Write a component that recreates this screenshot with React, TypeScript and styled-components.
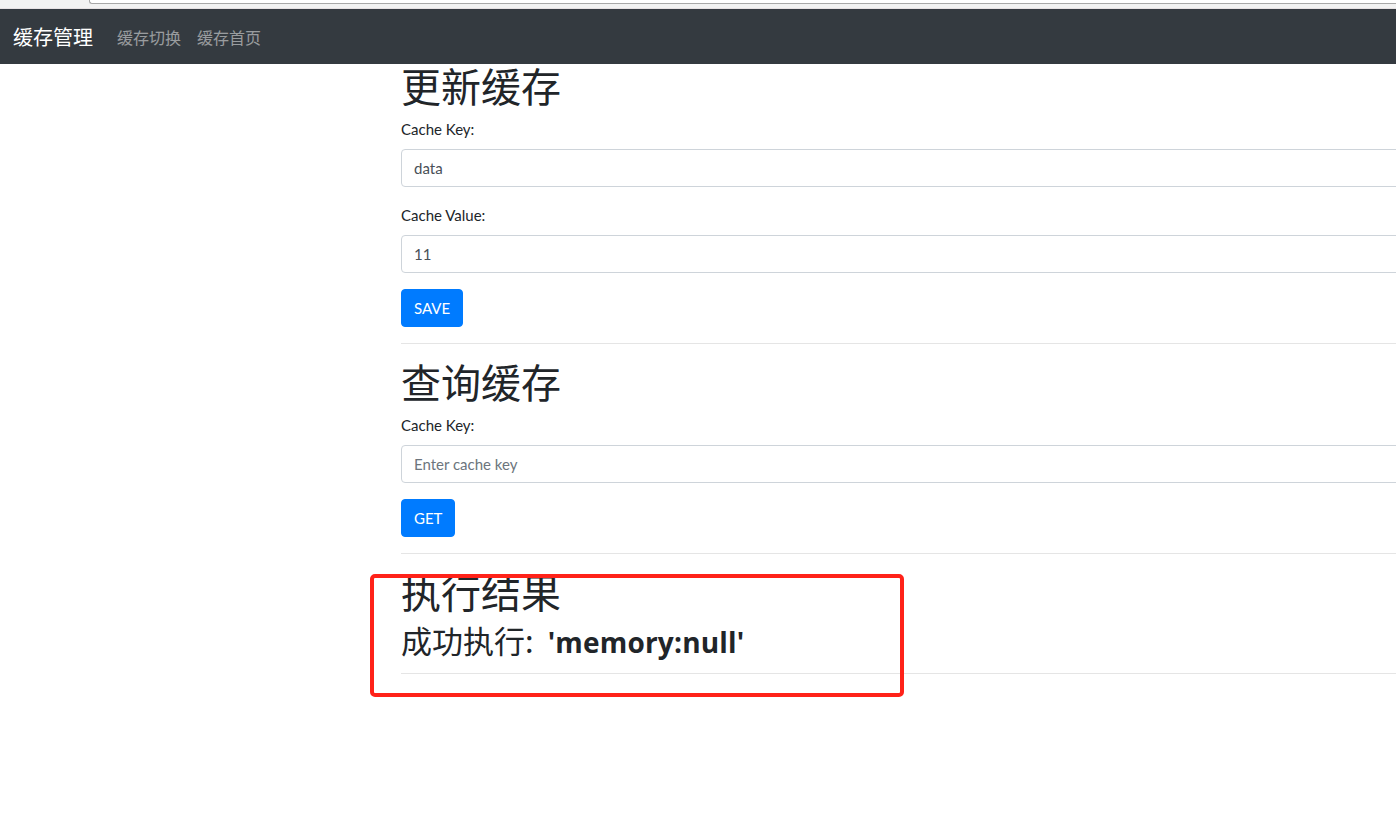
import React from 'react';
import styled, {createGlobalStyle} from 'styled-components';

const Global = createGlobalStyle`
  html { overflow: hidden; }
  body {
    margin: 0;
    padding: 0;
    min-height: 100vh;
    background: #fff;
    font-family: "Lato", "Noto Sans CJK SC", sans-serif;
    font-size: 16px;
    line-height: 1.5;
    color: #212529;
  }
  * { box-sizing: border-box; }
`;

const cjk = `"Noto Sans CJK SC", "Noto Sans", sans-serif`;

const Chrome = styled.div`
  height: 9px;
  background: #f2f2f2;
  padding-left: 89px;
  border-bottom: 1px solid #e6e1e3;
  .addr {
    height: 4px;
    background: #fff;
    border: 1px solid #a8a8a8;
    border-top: none;
    border-right: none;
    border-bottom-left-radius: 3px;
  }
`;

const NavBar = styled.nav`
  height: 55px;
  background: #343a40;
  display: flex;
  align-items: center;
  padding: 0 13px;
  font-family: ${cjk};
`;

const Brand = styled.a`
  color: #fff;
  font-size: 20px;
  margin-right: 16px;
  line-height: 30px;
`;

const NavLink = styled.a`
  color: rgba(255, 255, 255, 0.5);
  font-size: 16px;
  padding: 8px;
  line-height: 24px;
`;

const Container = styled.main`
  margin-left: 401px;
  width: 1110px;
`;

const Section = styled.section`
  position: relative;
`;

const Title = styled.h1`
  font-family: ${cjk};
  font-weight: 400;
  font-size: 40px;
  line-height: 42px;
  margin: 0 0 11px;
  color: #212529;
`;

const FormGroup = styled.div`
  margin-bottom: 16px;
`;

const Label = styled.label`
  display: block;
  font-size: 15px;
  line-height: 24px;
  margin-bottom: 8px;
`;

const Input = styled.input`
  display: block;
  width: 100%;
  height: 38px;
  padding: 6px 12px;
  font-family: "Lato", sans-serif;
  font-size: 15px;
  color: #495057;
  background: #fff;
  border: 1px solid #ced4da;
  border-radius: 4px;
  outline: none;
  &::placeholder { color: #6c757d; }
`;

const Button = styled.button`
  height: 38px;
  padding: 6px 12px;
  font-family: "Lato", sans-serif;
  font-size: 15px;
  color: #fff;
  background: #007bff;
  border: 1px solid #007bff;
  border-radius: 4px;
`;

const Rule = styled.hr<{ $top?: number }>`
  margin: ${p => p.$top ?? 16}px 0 16px;
  border: 0;
  border-top: 1px solid rgba(0, 0, 0, 0.1);
`;

const Result = styled.div`
  font-family: ${cjk};
  font-size: 31px;
  line-height: 34px;
  b {
    font-family: "Open Sans", sans-serif;
    font-size: 28px;
    font-weight: 700;
    margin-left: 14px;
    letter-spacing: 0.2px;
  }
`;

const Mark = styled.div`
  position: absolute;
  top: 4px;
  left: -31px;
  width: 534px;
  height: 123px;
  border: 4px solid #ff2219;
  border-radius: 5px;
  pointer-events: none;
`;

export default () => {
  return (<>
    <Global/>
    <Chrome><div className="addr"/></Chrome>
    <NavBar>
      <Brand>缓存管理</Brand>
      <NavLink>缓存切换</NavLink>
      <NavLink>缓存首页</NavLink>
    </NavBar>
    <Container>
      <Section>
        <Title>更新缓存</Title>
        <FormGroup>
          <Label>Cache Key:</Label>
          <Input defaultValue="data"/>
        </FormGroup>
        <FormGroup>
          <Label>Cache Value:</Label>
          <Input defaultValue="11"/>
        </FormGroup>
        <Button>SAVE</Button>
      </Section>
      <Rule/>
      <Section>
        <Title>查询缓存</Title>
        <FormGroup>
          <Label>Cache Key:</Label>
          <Input placeholder="Enter cache key"/>
        </FormGroup>
        <Button>GET</Button>
      </Section>
      <Rule/>
      <Section>
        <Title>执行结果</Title>
        <Result>成功执行:<b>'memory:null'</b></Result>
        <Rule $top={14}/>
        <Mark/>
      </Section>
    </Container>
  </>)
}
